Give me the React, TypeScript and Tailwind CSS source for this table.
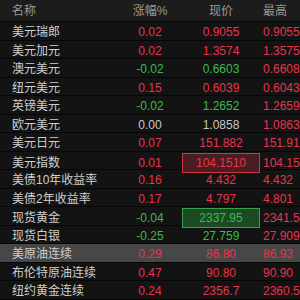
import React from "react";

type Tone = "up" | "down" | "flat";

type Row = {
  name: string;
  change: string;
  changeTone: Tone;
  price: string;
  priceTone: Tone;
  high: string;
  box?: "up" | "down";
  active?: boolean;
};

const rows: Row[] = [
  { name: "美元瑞郎", change: "0.02", changeTone: "up", price: "0.9055", priceTone: "up", high: "0.9055" },
  { name: "美元加元", change: "0.02", changeTone: "up", price: "1.3574", priceTone: "up", high: "1.3575" },
  { name: "澳元美元", change: "-0.02", changeTone: "down", price: "0.6603", priceTone: "down", high: "0.6608" },
  { name: "纽元美元", change: "0.15", changeTone: "up", price: "0.6039", priceTone: "up", high: "0.6043" },
  { name: "英镑美元", change: "-0.02", changeTone: "down", price: "1.2652", priceTone: "down", high: "1.2659" },
  { name: "欧元美元", change: "0.00", changeTone: "flat", price: "1.0858", priceTone: "flat", high: "1.0863" },
  { name: "美元日元", change: "0.07", changeTone: "up", price: "151.882", priceTone: "up", high: "151.91" },
  { name: "美元指数", change: "0.01", changeTone: "up", price: "104.1510", priceTone: "up", high: "104.15", box: "up" },
  { name: "美债10年收益率", change: "0.16", changeTone: "up", price: "4.432", priceTone: "up", high: "4.432" },
  { name: "美债2年收益率", change: "0.17", changeTone: "up", price: "4.797", priceTone: "up", high: "4.801" },
  { name: "现货黄金", change: "-0.04", changeTone: "down", price: "2337.95", priceTone: "down", high: "2341.5", box: "down" },
  { name: "现货白银", change: "-0.25", changeTone: "down", price: "27.759", priceTone: "down", high: "27.909" },
  { name: "美原油连续", change: "0.29", changeTone: "up", price: "86.80", priceTone: "up", high: "86.93", active: true },
  { name: "布伦特原油连续", change: "0.47", changeTone: "up", price: "90.80", priceTone: "up", high: "90.90" },
  { name: "纽约黄金连续", change: "0.24", changeTone: "up", price: "2356.7", priceTone: "up", high: "2360.5" },
];

const toneClass: Record<Tone, string> = {
  up: "text-[#e8344c]",
  down: "text-[#3dba4e]",
  flat: "text-[#c8c8c8]",
};

export default function App() {
  return (
    <div className="w-[300px] h-[300px] overflow-hidden bg-[#121212] text-[12px] font-['Liberation_Sans','Noto_Sans_CJK_SC',sans-serif]">
      {/* header */}
      <div className="grid grid-cols-[120px_60px_82px_80px] h-[22px] items-center bg-[#1c1c1c] border-b border-[#060606] text-[#9a9a9a]">
        <div className="pl-3">名称</div>
        <div className="text-center">涨幅%</div>
        <div className="text-center">现价</div>
        <div className="pl-[1px]">最高</div>
      </div>

      {rows.map((r) => (
        <div
          key={r.name}
          className={`grid grid-cols-[120px_60px_82px_80px] h-[18.5px] items-center border-b border-[#060606] ${
            r.active ? "bg-[#474747]" : "bg-[#131313]"
          }`}
        >
          <div className="pl-3 whitespace-nowrap text-[#cfcfcf]">{r.name}</div>
          <div className={`text-center ${toneClass[r.changeTone]}`}>{r.change}</div>
          <div className="h-full flex items-center justify-center px-[2px] py-[1px]">
            {r.box ? (
              <div
                className={`w-full h-full flex items-center justify-center border ${
                  r.box === "up"
                    ? "bg-[#4a1d22] border-[#d2313f] text-[#e8344c]"
                    : "bg-[#1c4a22] border-[#3aa046] text-[#3dba4e]"
                }`}
              >
                {r.price}
              </div>
            ) : (
              <span className={toneClass[r.priceTone]}>{r.price}</span>
            )}
          </div>
          <div className="pl-[1px] whitespace-nowrap text-[#e8344c]">{r.high}</div>
        </div>
      ))}
    </div>
  );
}
